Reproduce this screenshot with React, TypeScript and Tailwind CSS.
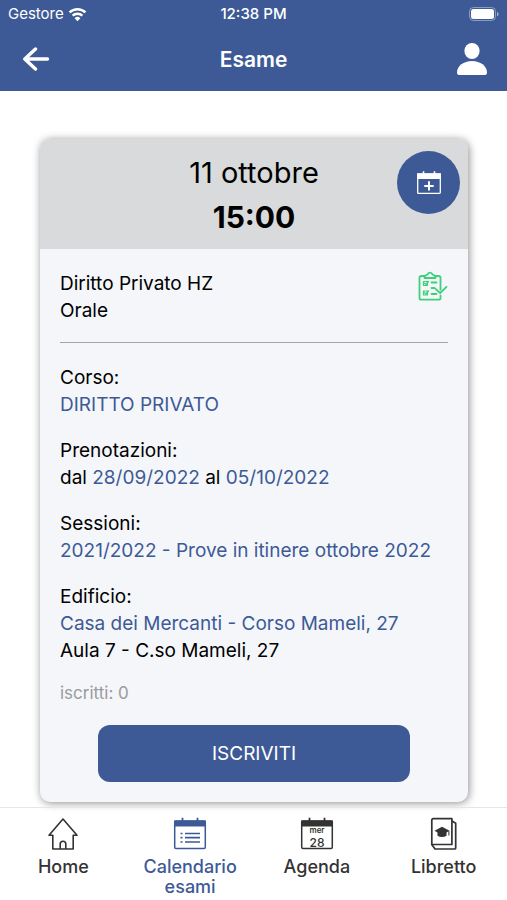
import React from "react";

const DETAILS = [
  { label: "Corso:", value: "DIRITTO PRIVATO" },
  {
    label: "Prenotazioni:",
    value: (
      <>
        <span className="text-black">dal</span> 28/09/2022 <span className="text-black">al</span> 05/10/2022
      </>
    ),
  },
  { label: "Sessioni:", value: "2021/2022 - Prove in itinere ottobre 2022" },
  { label: "Edificio:", value: "Casa dei Mercanti - Corso Mameli, 27", note: "Aula 7 - C.so Mameli, 27" },
];

const WifiIcon = () => (
  <svg width="19" height="15" viewBox="0 0 20 16" fill="none" stroke="currentColor" strokeWidth="2.6">
    <path d="M1.5 5.8a12.2 12.2 0 0 1 17 0" />
    <path d="M4.8 9.2a7.5 7.5 0 0 1 10.4 0" />
    <path d="M10 15.2 6.9 12a4.4 4.4 0 0 1 6.2 0z" fill="currentColor" stroke="none" />
  </svg>
);

const BatteryIcon = () => (
  <svg width="30" height="14" viewBox="0 0 30 14" fill="none">
    <rect x="0.5" y="0.5" width="26" height="13" rx="4" stroke="#fff" strokeOpacity="0.4" />
    <rect x="2" y="2" width="23" height="10" rx="2.5" fill="#fff" />
    <path d="M28 5v4.4c1-.4 1.6-1.2 1.6-2.2S29 5.4 28 5z" fill="#fff" fillOpacity="0.5" />
  </svg>
);

const BackIcon = () => (
  <svg width="28" height="26" viewBox="0 0 28 26" fill="none" stroke="currentColor" strokeWidth="3.4" strokeLinecap="round" strokeLinejoin="round">
    <path d="M13.5 2 2.8 12l10.7 10M3.5 12h22" />
  </svg>
);

const UserIcon = () => (
  <svg width="30" height="34" viewBox="0 0 30 34" fill="currentColor">
    <ellipse cx="15" cy="8" rx="7.6" ry="8" />
    <path d="M3 32c-1.9 0-3-.8-3-2.6C0 23 6.6 18 15 18s15 5 15 11.4c0 1.8-1.1 2.6-3 2.6z" />
  </svg>
);

const CalendarPlusIcon = () => (
  <svg width="26" height="24" viewBox="0 0 26 24" fill="none" stroke="currentColor">
    <rect x="1.7" y="3.2" width="22.6" height="19.2" rx="0.8" strokeWidth="1.3" />
    <path d="M1 2.3h24V8H1z" fill="currentColor" stroke="none" />
    <path d="M7.5 0.3v3M18.5 0.3v3" strokeWidth="1.6" />
    <path d="M13 10.2v9.4M8.3 14.9h9.4" strokeWidth="2" />
  </svg>
);

const ChecklistIcon = () => (
  <svg width="30" height="32" viewBox="0 0 30 32" fill="none" stroke="#3fd07b" strokeWidth="1.8" strokeLinecap="round" strokeLinejoin="round">
    <path d="M7 6H3.2a1.700 1.700 0 0 0-1.700 1.700V28a1.700 1.700 0 0 0 1.700 1.700h17.600a1.700 1.700 0 0 0 1.700-1.700v-2.500M17 6h3.800a1.700 1.700 0 0 1 1.700 1.700v12" />
    <path d="M6.500 8V6l3-1.500a2.600 2.600 0 0 1 5 0l3 1.500v2z" />
    <path d="M5.500 11.500h4v4h-4zM5.500 21h4v4h-4z" strokeWidth="1.2" />
    <path d="m6.500 13.200 1.300 1.300 2.700-3M6.500 22.700l1.300 1.300 2.700-3" strokeWidth="1.2" />
    <path d="M13.500 12.500h5M13.500 18h3M13.500 24h5" />
    <path d="m17.500 18.800 4.700 4.200 6.300-6.200" />
  </svg>
);

const HomeIcon = () => (
  <svg width="32" height="34" viewBox="0 0 32 34" fill="none" stroke="currentColor" strokeWidth="1.6" strokeLinejoin="round">
    <path d="M16 2 2 18.2h3.8V32h20.4V18.2H30z" />
    <path d="M13.2 32v-5a2.8 2.8 0 0 1 5.6 0v5" />
  </svg>
);

const CalendarFrame = () => (
  <>
    <rect x="1.7" y="4" width="30.6" height="27.5" rx="1.2" strokeWidth="1.5" />
    <path d="M1 3.5h32v6H1z" fill="currentColor" stroke="none" />
    <path d="M9.5 0.8v4M24.5 0.8v4" strokeWidth="1.8" />
  </>
);

const CalendarListIcon = () => (
  <svg width="34" height="34" viewBox="0 0 34 34" fill="none" stroke="currentColor">
    <CalendarFrame />
    <path d="M7.5 16.5h2M7.5 20.7h2M7.5 25h2M12 16.5h15M12 20.7h15M12 25h15" strokeWidth="1.7" />
  </svg>
);

const AgendaIcon = () => (
  <svg width="34" height="34" viewBox="0 0 34 34" fill="none" stroke="currentColor">
    <CalendarFrame />
    <g fill="currentColor" stroke="none" textAnchor="middle" fontFamily="Inter, sans-serif">
      <text x="17" y="16" fontSize="8" fontWeight="600">mer</text>
      <text x="17" y="30" fontSize="12" fontWeight="500">28</text>
    </g>
  </svg>
);

const BookIcon = () => (
  <svg width="28" height="34" viewBox="0 0 28 34" fill="none" stroke="currentColor" strokeWidth="1.7" strokeLinejoin="round">
    <path d="M1.8 27.5V3a1.3 1.3 0 0 1 1.3-1.3h18.8v25.8z" />
    <path d="M1.8 27.5 5 32h19.700a1 1 0 0 0 1-1V6.200L22 4" />
    <path d="m12 9.800-7.500 4 7.500 4.200 7.500-4.200z" fill="currentColor" stroke="none" />
    <path d="M7.500 14v4.800c2.600 1.600 6.400 1.600 9 0V14z" fill="currentColor" stroke="none" />
    <path d="M18.900 14v4.500" strokeWidth="1" />
  </svg>
);

const NAV_ITEMS = [
  { label: "Home", icon: HomeIcon },
  { label: "Calendario esami", icon: CalendarListIcon, active: true },
  { label: "Agenda", icon: AgendaIcon },
  { label: "Libretto", icon: BookIcon },
];

const App = () => {
  return (
    <div className="flex min-h-screen flex-col bg-white font-['Inter',sans-serif] text-black">
      <header className="bg-[#3d5a96] text-white">
        {/* Status bar */}
        <div className="grid h-7 grid-cols-3 items-center px-2 text-[15px]">
          <div className="flex items-center gap-1">
            <span>Gestore</span>
            <WifiIcon />
          </div>
          <span className="text-center font-medium">12:38 PM</span>
          <div className="flex justify-end">
            <BatteryIcon />
          </div>
        </div>

        {/* Title bar */}
        <div className="grid h-[63px] grid-cols-3 items-center px-5">
          <button aria-label="Indietro" className="flex w-8 justify-center">
            <BackIcon />
          </button>
          <h1 className="text-center text-[21px] font-semibold">Esame</h1>
          <button aria-label="Profilo" className="justify-self-end">
            <UserIcon />
          </button>
        </div>
      </header>

      <main className="flex-1 pt-12 pr-[39px] pb-1 pl-10">
        <article className="overflow-hidden rounded-[10px] bg-[#f4f6fa] shadow-[1px_1px_8px_rgba(0,0,0,0.45)]">
          <div className="relative bg-[#d8dadb] pt-[11px] pb-[9px] text-center">
            <p className="text-[29px] leading-[45px]">11 ottobre</p>
            <p className="text-[30px] leading-[45px] font-bold">15:00</p>
            <button
              aria-label="Aggiungi al calendario"
              className="absolute top-3 right-2 flex size-[63px] items-center justify-center rounded-full bg-[#3d5a96] text-white"
            >
              <CalendarPlusIcon />
            </button>
          </div>

          <div className="px-5 pt-[21px] pb-5 text-[19px] leading-[27px]">
            <div className="flex items-start justify-between border-b border-[#a3a5a8] pb-[18px]">
              <div>
                <h2>Diritto Privato HZ</h2>
                <p>Orale</p>
              </div>
              <ChecklistIcon />
            </div>

            <dl className="flex flex-col gap-[19px] pt-[21px]">
              {DETAILS.map((item) => (
                <div key={item.label}>
                  <dt>{item.label}</dt>
                  <dd className="text-[#3d5a96]">{item.value}</dd>
                  {item.note && <dd>{item.note}</dd>}
                </div>
              ))}
            </dl>

            <p className="pt-4 text-[17px] text-[#9a9b9e]">iscritti: 0</p>

            <div className="px-[38px] pt-[18px]">
              <button className="h-[57px] w-full rounded-xl bg-[#3d5a96] text-[19px] text-white">ISCRIVITI</button>
            </div>
          </div>
        </article>
      </main>

      <nav className="grid h-[93px] grid-cols-4 border-t border-[#e6e6e8] pt-[9px]">
        {NAV_ITEMS.map(({ label, icon: Icon, active }) => (
          <a
            key={label}
            href="#"
            className={`flex flex-col items-center gap-1.5 px-4 text-center text-[18px] leading-5 font-medium ${
              active ? "text-[#3d5a96]" : "text-[#333333]"
            }`}
          >
            <Icon />
            <span>{label}</span>
          </a>
        ))}
      </nav>
    </div>
  );
};

export default App;
